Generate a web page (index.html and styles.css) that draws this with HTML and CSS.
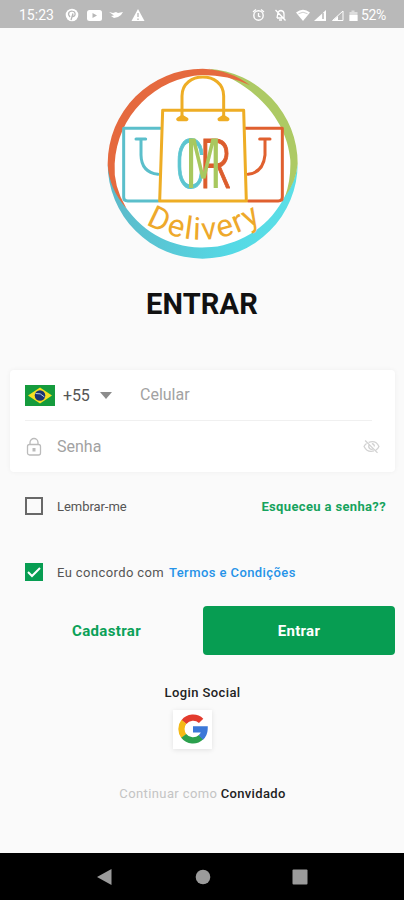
FILE: index.html
```html
<!DOCTYPE html>
<html lang="pt-BR">
<head>
<meta charset="utf-8">
<meta name="viewport" content="width=device-width, initial-scale=1">
<title>Entrar</title>
<link rel="stylesheet" href="styles.css">
</head>
<body>
<div class="screen">
  <header class="status">
    <span class="clock">15:23</span>
    <svg class="status-left" viewBox="0 0 80 14" fill="#fff">
      <circle cx="7" cy="7" r="6.3"/><path d="M5 9C1.500 5 5 2.800 7.500 3.200c4 .4 3 6-.2 5.400L8 5.500 6 12" fill="none" stroke="#b7b7b7" stroke-width="1.300"/>
      <rect x="22" y="2" width="15" height="11" rx="2.500"/><path d="M27.500 5v5l4.500-2.500z" fill="#b7b7b7"/>
      <path d="M44 4l4 1 3-1 2 1 5-1-2 3-3 2-4 1-3-2 3-.5z"/>
      <path d="M73 1l6.500 12h-13z"/><path d="M73 5v4m0 1.500V12" stroke="#b7b7b7" stroke-width="1.300"/>
    </svg>
    <svg class="status-right" viewBox="0 0 106 14" fill="none" stroke="#fff">
      <circle cx="6.500" cy="7.500" r="4.700" stroke-width="1.400"/><path d="M1 4l3-2.500M9 1.500L12 4M6.500 5v3l2 1" stroke-width="1.300"/>
      <path d="M25 10h7V6q0-3-3-3.500-2 0-3 2L25 10M27 12h3M23.500 2l10 10.500" stroke-width="1.300"/>
      <path d="M44 4.500q7-5.500 14 0L51 13z" fill="#fff" stroke="none"/><path d="M46.500 5.700q4.500-3 9 0" stroke="#b7b7b7" stroke-width=".7"/>
      <path d="M74 2v11H62z" fill="#fff" stroke="none"/><path d="M71 5v6" stroke="#b7b7b7" stroke-width="1.500"/>
      <path d="M91 3v9.500H80.500z"/><path d="M86 8v4.500h-5z" fill="#fff" stroke="none"/>
      <path d="M97.500 4h2V2.500h3V4h3v9h-8z" fill="#ddd" stroke="none"/><path d="M97.500 7h8v6h-8z" fill="#fff" stroke="none"/>
    </svg>
    <span class="battery">52%</span>
  </header>

  <main class="content">
    <svg class="logo" viewBox="0 0 615 615" role="img" aria-label="CMR Delivery">
      <defs>
        <linearGradient id="aqua" x1="0" y1="0" x2="1" y2="0"><stop stop-color="#5cb9c9"/><stop offset=".65" stop-color="#54d9e5"/><stop offset="1" stop-color="#5cdfe6"/></linearGradient>
        <path id="smile" d="M137 492Q310 592 490 480"/>
      </defs>
      <circle cx="308" cy="311" r="278" fill="#fff"/>
      <path d="M23 311A285 285 0 0 0 593 311Q588 362 555 408A277 277 0 0 1 88 456Q42 402 23 311Z" fill="url(#aqua)"/>
      <path d="M325 26.500A285 285 0 0 1 593 311Q588 366 555 410Q573 360 571 300C562 190 480 80 325 26.500Z" fill="#adca64"/>
      <path d="M450 76Q390 29 308 26A285 285 0 0 0 23 311Q26 385 80 446Q39 378 44 311A280 280 0 0 1 308 45Q385 45 450 76Z" fill="#e5693e"/>
      <g fill="none" stroke-width="9" stroke-linecap="round" stroke-linejoin="round">
        <path stroke="#5bbfcb" d="M181 205H71V412Q71 423 83 423H174M108 237H137M123 237V285Q124 337 174 343"/>
        <path stroke="#e0602f" d="M436 205H547V412Q547 423 535 423H445M479 237H510M495 237V285Q490 337 444 343"/>
        <path stroke="#eead25" d="M188 151H431L439 423H179ZM246 170V108C246 32 371 32 371 108V170"/>
        <path stroke="#eead25" stroke-width="11" d="M234 178H260L246 170ZM358 178H383L371 170Z"/>
      </g>
      <g class="initials">
        <text class="c" x="225" y="384" textLength="92" lengthAdjust="spacingAndGlyphs">C</text>
        <text class="r" x="298" y="384" textLength="98" lengthAdjust="spacingAndGlyphs">R</text>
        <text class="m" x="254" y="384" textLength="112" lengthAdjust="spacingAndGlyphs">M</text>
      </g>
      <text class="wordmark"><textPath href="#smile" textLength="366" lengthAdjust="spacing">Delivery</textPath></text>
    </svg>

    <h1 class="title">ENTRAR</h1>

    <section class="card">
      <div class="row phone">
        <svg class="flag" viewBox="0 0 30 21"><path fill="#159b3d" d="M0 0h30v21H0z"/><path fill="#f7df22" d="M15 2.500L27 10.500 15 18.500 3 10.500z"/><circle cx="15" cy="10.500" r="5.300" fill="#1b3473"/><path d="M10.500 8.500q5-1 9 3.500" fill="none" stroke="#b8cce0" stroke-width="1"/></svg>
        <span class="code">+55</span>
        <svg class="caret" viewBox="0 0 12 7"><path d="M0 0h12L6 7z" fill="#8c8c8c"/></svg>
        <span class="hint">Celular</span>
      </div>
      <div class="row password">
        <svg class="lock" viewBox="0 0 16 20" fill="none" stroke="#bbb" stroke-width="1.300"><rect x="1.500" y="7.500" width="13" height="10.500" rx="2"/><path d="M4 7.500V5.500a4 4 0 0 1 8 0v2"/><path d="M6.500 11h3v3.500h-3z" fill="#bbb" stroke="none"/></svg>
        <span class="hint">Senha</span>
        <svg class="eye" viewBox="0 0 24 24" fill="none" stroke="#d2d2d2" stroke-width="1.800"><path d="M8 6.300Q18 2.500 22.500 12 21 15.500 18 17.300M5 7.800Q2.500 9.500 1.500 12 6 21 15.500 18.300M3 3.500L20.500 21M8.800 9.500a4.200 4.200 0 0 0 5.800 5.800M12.500 8a4.200 4.200 0 0 1 3.600 4"/></svg>
      </div>
    </section>

    <div class="option">
      <span class="box"></span>
      <span class="label remember">Lembrar-me</span>
      <a class="forgot">Esqueceu a senha??</a>
    </div>
    <div class="option terms">
      <span class="box checked"><svg viewBox="0 0 18 18"><path d="M3 9l4 4 8-8" fill="none" stroke="#fff" stroke-width="2"/></svg></span>
      <span class="label agree">Eu concordo com</span>
      <a class="link">Termos e Condições</a>
    </div>

    <div class="actions">
      <a class="register">Cadastrar</a>
      <button class="enter" type="button">Entrar</button>
    </div>

    <h2 class="social">Login Social</h2>
    <button class="google" type="button" aria-label="Google">
      <svg viewBox="0 0 48 48" fill="none" stroke-width="10"><path stroke="#e33b2e" d="M9.500 13A18.500 18.500 0 0 1 37 11"/><path stroke="#f4b916" d="M9.500 35.500A18.500 18.500 0 0 1 9.500 12.500"/><path stroke="#2ba04d" d="M37 37A18.500 18.500 0 0 1 9.200 35"/><path stroke="#3b78d8" d="M24 24.500H42.500A18.500 18.500 0 0 1 36.500 37.500"/></svg>
    </button>
    <p class="guest"><span class="muted">Continuar como</span> <a class="visitor">Convidado</a></p>
  </main>

  <nav class="navbar">
    <svg viewBox="0 0 16 16"><path d="M0 8L14.500 0v16z"/></svg>
    <svg viewBox="0 0 16 16"><circle cx="8" cy="8" r="7.300"/></svg>
    <svg viewBox="0 0 16 16"><rect x=".5" y=".5" width="15" height="15" rx="1"/></svg>
  </nav>
</div>
</body>
</html>
```
FILE: styles.css
```css
* { box-sizing: border-box; }
body { margin: 0; background: #fafafa; font-family: Roboto, "Liberation Sans", sans-serif; color: #111; }
svg { display: block; flex: none; }
.screen { width: 404px; height: 900px; display: flex; flex-direction: column; overflow: hidden; }
.status { height: 28px; flex: none; background: #b9b9b9; color: #fff; display: flex; align-items: center; padding: 2px 16px 0 19px; font-size: 14px; font-weight: 400; }
.clock { width: 46px; letter-spacing: 0; }
.status-left { width: 80px; height: 14px; }
.status-right { width: 106px; height: 14px; margin-left: auto; }
.battery { width: 27px; margin-left: 3px; font-size: 14px; letter-spacing: -.4px; }
.content { flex: 1; display: flex; flex-direction: column; }
.logo { width: 205px; height: 205px; margin: 32px 0 0 100px; }
.initials { font: 300 207px Roboto, sans-serif; stroke-width: 3px; }
.c { fill: #5cc5d0; stroke: #5cc5d0; }
.r { fill: #dc5d2d; stroke: #dc5d2d; }
.m { font: 400 202px "DejaVu Sans", sans-serif; fill: #a8c85f; stroke: none; }
.wordmark { font: 400 94px Roboto, sans-serif; fill: #eea92b; }
.title { margin: 23px 0 0; height: 32px; line-height: 32px; font-size: 29px; font-weight: 700; text-align: center; letter-spacing: .2px; }
.card { height: 102px; margin: 50px 9px 0 10px; padding: 0 15px; background: #fff; border-radius: 4px; box-shadow: 0 0 5px rgba(0,0,0,.05); }
.row { display: flex; align-items: center; }
.phone { height: 51px; margin-right: 8px; border-bottom: 1px solid #f0f0f0; }
.flag { width: 30px; height: 21px; }
.code { width: 36px; margin-left: 8px; font-size: 16px; color: #555; letter-spacing: -.2px; }
.caret { width: 12px; height: 7px; margin-left: 1px; margin-right: 28px; }
.hint { font-size: 16px; color: #a2a2a2; margin-top: -1px; }
.password { height: 51px; }
.lock { width: 18px; height: 20px; margin-right: 14px; }
.eye { width: 17px; height: 17px; margin-left: auto; }
.option { display: flex; align-items: center; height: 20px; margin: 24px 18px 0 25px; font-size: 13px; }
.terms { margin-top: 46px; }
.box { width: 18px; height: 18px; border: 2px solid #686868; margin-right: 14px; flex: none; }
.checked { border: 0; background: #079d52; }
.label { color: #555; }
.remember { letter-spacing: -.05px; }
.agree { letter-spacing: .4px; width: 112px; white-space: nowrap; }
.forgot { margin-left: auto; color: #16a35d; font-weight: 700; letter-spacing: .35px; }
.link { color: #2693e8; font-weight: 500; letter-spacing: .42px; }
.actions { display: flex; align-items: center; margin: 24px 9px 0 10px; }
.register { width: 193px; text-align: center; color: #0ba158; font-size: 15px; font-weight: 700; letter-spacing: .35px; }
.enter { width: 192px; height: 49px; border: 0; border-radius: 4px; background: #079d52; color: #fff; font: 700 15px Roboto, sans-serif; letter-spacing: .3px; }
.social { margin: 29px 0 0; height: 18px; line-height: 18px; font-size: 13px; font-weight: 500; text-align: center; color: #222; letter-spacing: .4px; padding-left: 1px; }
.google { width: 39px; height: 39px; margin: 8px 0 0 173px; padding: 4px 4px 5px 5px; border: 0; background: #fff; box-shadow: 0 1px 5px rgba(0,0,0,.1); }
.google svg { width: 30px; height: 30px; }
.guest { margin: 36px 0 0; height: 18px; line-height: 18px; font-size: 13px; text-align: center; padding-left: 1px; }
.muted { color: #c4c4c4; letter-spacing: .4px; }
.visitor { color: #222; font-weight: 500; letter-spacing: .35px; }
.navbar { height: 47px; flex: none; background: #000; display: flex; align-items: center; justify-content: space-between; padding: 1px 96px 0 97px; fill: #9b9b9b; }
.navbar svg { width: 16px; height: 16px; }
```
